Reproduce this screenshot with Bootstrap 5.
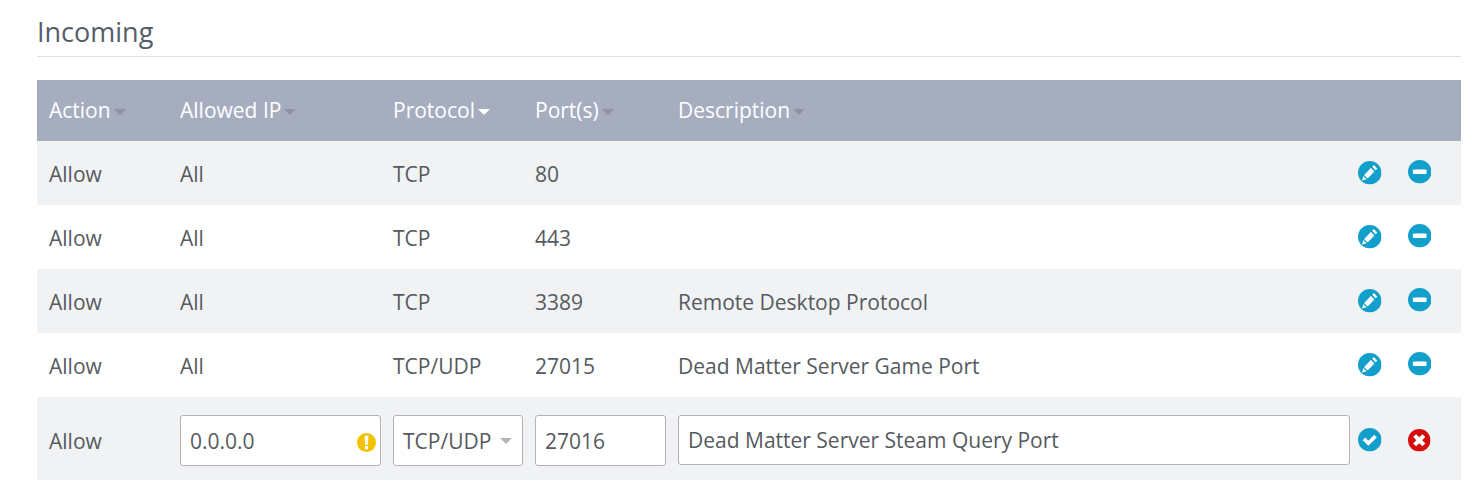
<!DOCTYPE html>
<html lang="en">
<head>
<meta charset="utf-8">
<title>Incoming</title>
<link href="https://cdn.jsdelivr.net/npm/bootstrap@5.3.0/dist/css/bootstrap.min.css" rel="stylesheet">
<style>
html,body{background:#fff;overflow:hidden}
body{font-family:"Open Sans","Liberation Sans",sans-serif;color:#555a60;font-size:21px;line-height:28px}
.fw-page{padding:0 14px 0 37px}
.fw-title{font-size:27px;line-height:36px;font-weight:400;color:#555d6a;margin:0;padding:14px 0 6px;border-bottom:1px solid #dcdee0;height:57px}
.fw-table{table-layout:fixed;width:1424px;margin:23px 0 0;border-collapse:collapse}
.fw-table>*>tr>*{border:0;padding:0 12px;vertical-align:middle;box-shadow:none;background:transparent;color:#555a60;font-weight:400}
.fw-table thead tr{background:#a6adbf;height:61px}
.fw-table thead th{color:#fff;padding-bottom:1px}
.fw-table tbody tr{height:64px}
.fw-table tbody tr>td{padding-top:2px}
.fw-table tbody tr.fw-odd{background:#f1f2f4}
.fw-table tbody tr.fw-edit{height:88px;background:#f1f2f4}
.fw-table tbody tr.fw-edit>td{padding-top:0;padding-bottom:0;vertical-align:top}
.fw-table tbody tr.fw-edit>td.fw-plain{padding-top:30px}
.fw-table tbody tr.fw-edit>td.fw-cell{padding-right:0}
.fw-caret{display:inline-block;width:0;height:0;border-left:6.5px solid transparent;border-right:6.5px solid transparent;border-top:6px solid #8b92a3;margin-left:3px;vertical-align:3px}
.fw-caret.fw-on{border-top-color:#fff}
.fw-table>*>tr>.fw-actions{padding:0 0 0 8px}
.fw-icons{display:flex;align-items:flex-start;gap:26px}
.fw-icons svg{display:block;width:23.5px;height:23.5px;flex:none}
.fw-icons .fw-up{margin-top:-1px}
.fw-field{height:51px;margin-top:18px;position:relative}
.fw-field .form-control,.fw-field .fw-select{height:51px;font-family:inherit;font-size:21px;line-height:28px;color:#555a60;background-color:#fff;border:1px solid #b2b3b8;border-radius:3px;padding:10px 9px;box-shadow:none}
.fw-select{display:flex;align-items:center;justify-content:space-between;white-space:nowrap}
.fw-sel-caret{width:0;height:0;border-left:6px solid transparent;border-right:6px solid transparent;border-top:6px solid #b2b3b8;flex:none;margin-right:1px}
.fw-warn{position:absolute;right:5px;top:18px;width:19px;height:19px}
.fw-field .fw-short{height:50px;padding-top:9px}
.fw-icons.fw-editicons{padding-top:31px}
.fw-editicons .fw-small{width:22.5px;height:22.5px;margin-top:1px;margin-left:.5px}
</style>
</head>
<body>
<div class="fw-page">
<h2 class="fw-title">Incoming</h2>
<table class="table fw-table">
<colgroup><col style="width:131px"><col style="width:213px"><col style="width:142px"><col style="width:143px"><col style="width:684px"><col style="width:111px"></colgroup>
<thead>
<tr>
<th>Action<span class="fw-caret"></span></th>
<th>Allowed IP<span class="fw-caret"></span></th>
<th>Protocol<span class="fw-caret fw-on"></span></th>
<th>Port(s)<span class="fw-caret"></span></th>
<th>Description<span class="fw-caret"></span></th>
<th></th>
</tr>
</thead>
<tbody>
<tr class="fw-odd"><td>Allow</td><td>All</td><td>TCP</td><td>80</td><td></td>
<td class="fw-actions"><div class="fw-icons"><svg viewBox="0 0 24 24"><use href="#ic-edit"/></svg><svg class="fw-up" viewBox="0 0 24 24"><use href="#ic-minus"/></svg></div></td></tr>
<tr><td>Allow</td><td>All</td><td>TCP</td><td>443</td><td></td>
<td class="fw-actions"><div class="fw-icons"><svg viewBox="0 0 24 24"><use href="#ic-edit"/></svg><svg class="fw-up" viewBox="0 0 24 24"><use href="#ic-minus"/></svg></div></td></tr>
<tr class="fw-odd"><td>Allow</td><td>All</td><td>TCP</td><td>3389</td><td>Remote Desktop Protocol</td>
<td class="fw-actions"><div class="fw-icons"><svg viewBox="0 0 24 24"><use href="#ic-edit"/></svg><svg class="fw-up" viewBox="0 0 24 24"><use href="#ic-minus"/></svg></div></td></tr>
<tr><td>Allow</td><td>All</td><td>TCP/UDP</td><td>27015</td><td>Dead Matter Server Game Port</td>
<td class="fw-actions"><div class="fw-icons"><svg viewBox="0 0 24 24"><use href="#ic-edit"/></svg><svg class="fw-up" viewBox="0 0 24 24"><use href="#ic-minus"/></svg></div></td></tr>
<tr class="fw-edit">
<td class="fw-plain">Allow</td>
<td class="fw-cell"><div class="fw-field"><input class="form-control" value="0.0.0.0" aria-label="Allowed IP">
<svg class="fw-warn" viewBox="0 0 24 24"><circle cx="12" cy="12" r="12" fill="#f2c200"/><path d="M9.500 3.500h5l-.8 11.500h-3.400zM10 16.500h4v4h-4z" fill="#fff"/></svg></div></td>
<td class="fw-cell"><div class="fw-field"><div class="fw-select"><span>TCP/UDP</span><span class="fw-sel-caret"></span></div></div></td>
<td class="fw-cell"><div class="fw-field"><input class="form-control" value="27016" aria-label="Ports"></div></td>
<td class="fw-cell"><div class="fw-field"><input class="form-control fw-short" value="Dead Matter Server Steam Query Port" aria-label="Description"></div></td>
<td class="fw-actions"><div class="fw-icons fw-editicons"><svg viewBox="0 0 24 24"><use href="#ic-check"/></svg><svg class="fw-small" viewBox="0 0 24 24"><use href="#ic-x"/></svg></div></td>
</tr>
</tbody>
</table>
</div>
<svg width="0" height="0" class="d-block" aria-hidden="true">
<defs>
<symbol id="ic-edit" viewBox="0 0 24 24"><circle cx="12" cy="12" r="12" fill="#129fcb"/><path d="M16.200 4.200l3.600 3.600-1.700 1.700-3.600-3.600zM13.200 7.200l3.600 3.600-7 7-3.600-3.600zM5.300 15.200l3.500 3.500-4.600 1.100z" fill="#fff"/></symbol>
<symbol id="ic-minus" viewBox="0 0 24 24"><circle cx="12" cy="12" r="12" fill="#129fcb"/><rect x="5" y="9.800" width="14" height="4.400" rx=".8" fill="#fff"/></symbol>
<symbol id="ic-check" viewBox="0 0 24 24"><circle cx="12" cy="12" r="12" fill="#129fcb"/><path d="M4.800 12.400l2.600-2.600 3.200 3.200 6-6 2.600 2.600-8.600 8.600z" fill="#fff"/></symbol>
<symbol id="ic-x" viewBox="0 0 24 24"><circle cx="12" cy="12" r="12" fill="#d50d0d"/><path d="M8.600 5.500l3.400 3.400 3.400-3.400 3.100 3.100-3.400 3.400 3.400 3.400-3.100 3.100-3.400-3.400-3.400 3.400-3.100-3.100 3.400-3.400-3.400-3.400z" fill="#fff"/></symbol>
</defs>
</svg>
</body>
</html>
